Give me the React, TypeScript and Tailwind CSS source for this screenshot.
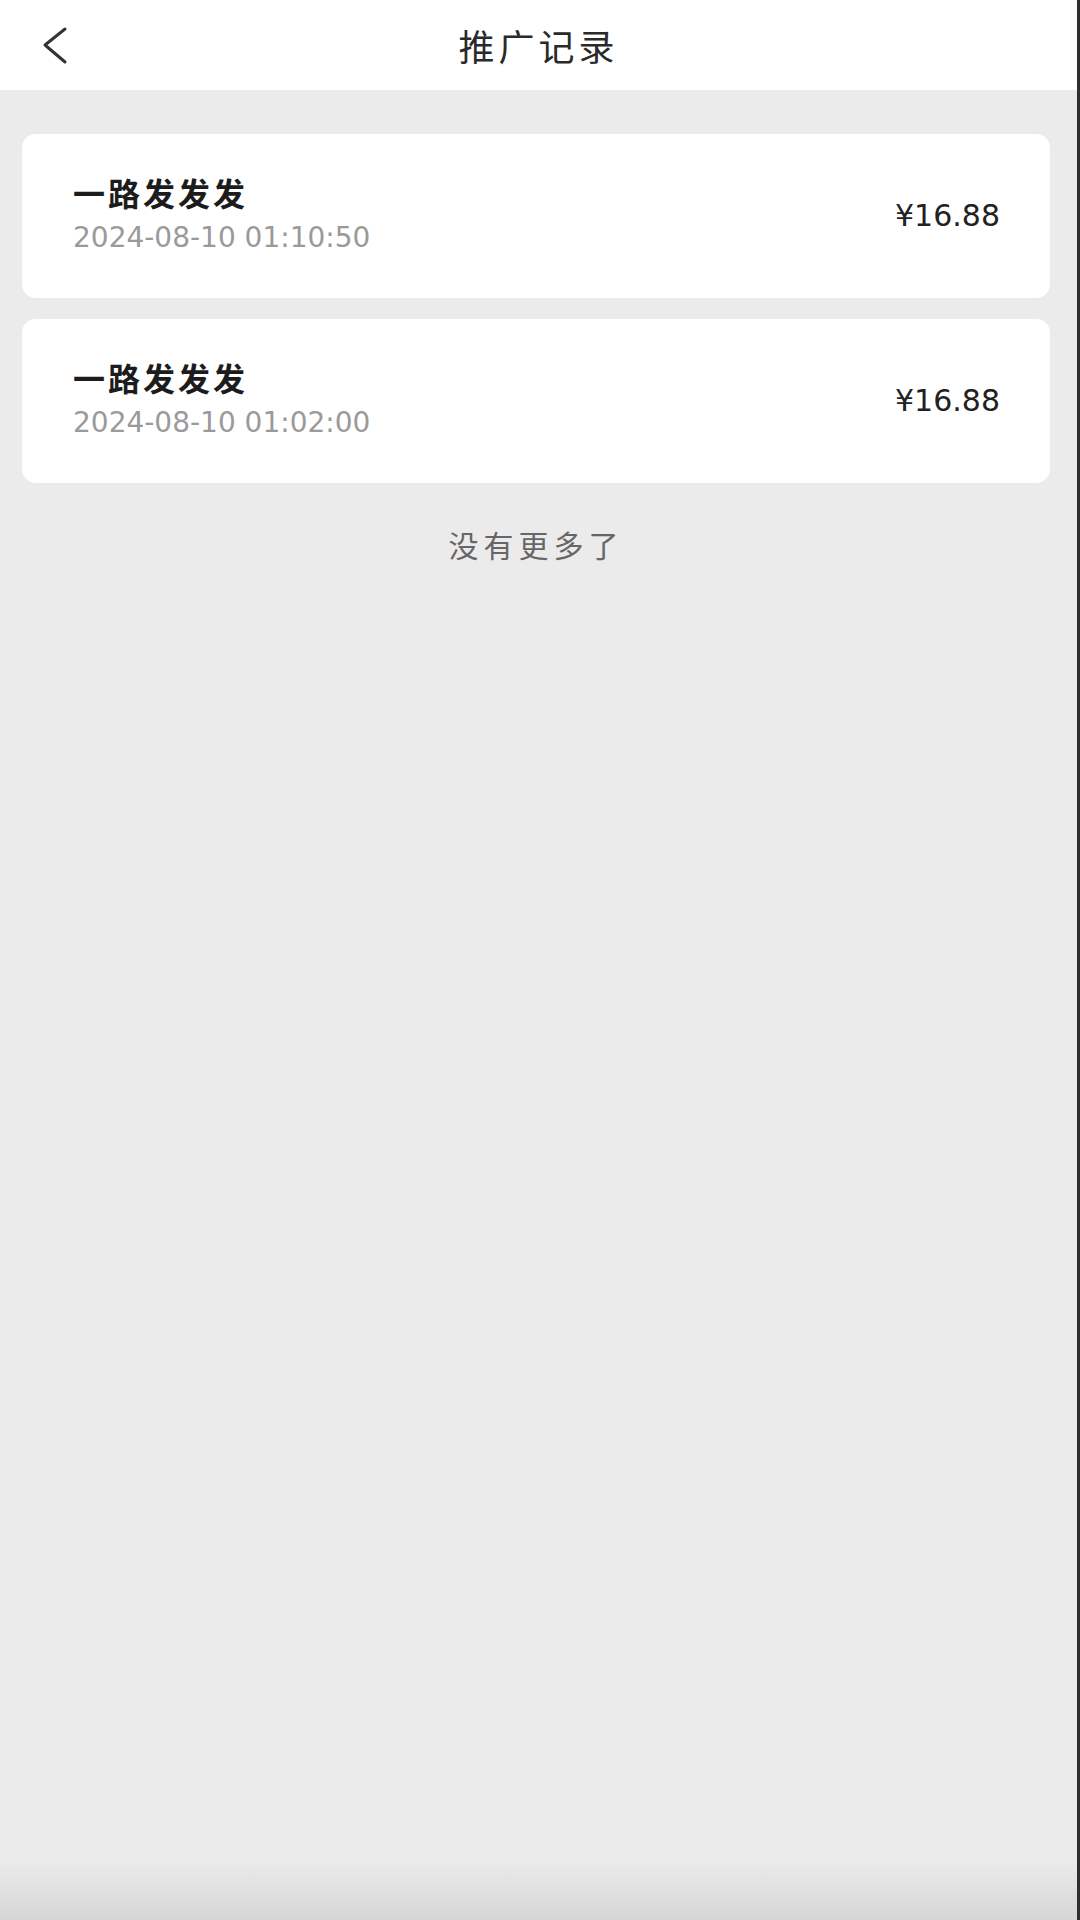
const records = [
  { id: 1, name: "一路发发发", time: "2024-08-10 01:10:50", amount: "16.88" },
  { id: 2, name: "一路发发发", time: "2024-08-10 01:02:00", amount: "16.88" },
];

const font = "font-['DejaVu_Sans','Noto_Sans_CJK_SC',sans-serif]";

function BackIcon() {
  return (
    <svg width="30" height="40" viewBox="0 0 30 40" fill="none">
      <polyline points="24,4 4,20 24,37" stroke="#333" strokeWidth="3" strokeLinecap="round" strokeLinejoin="round" />
    </svg>
  );
}

export default function App() {
  return (
    <div className={`${font} w-[1080px] h-[1920px] flex flex-col bg-[#ebebeb] border-r-[3px] border-[#2e2e2e]`}>
      {/* header */}
      <header className="h-[90px] shrink-0 bg-white grid grid-cols-[1fr_auto_1fr] items-center">
        <div className="pl-[41px] flex items-center">
          <BackIcon />
        </div>
        <h1 className="text-[36px] leading-none tracking-[4px] text-[#2a2a2a] font-['Noto_Sans_CJK_SC',sans-serif]">推广记录</h1>
        <div />
      </header>

      <main className="flex-1 flex flex-col pl-[22px] pr-[27px] pt-[44px]">
        <div className="flex flex-col gap-[21px]">
          {records.map((r) => (
            <div key={r.id} className="h-[164px] bg-white rounded-[14px] flex items-center justify-between pl-[51px] pr-[50px]">
              <div className="flex flex-col gap-[10px] pb-[4px]">
                <span className="text-[32px] leading-[38px] font-bold tracking-[3px] text-[#1c1c1c] font-['Noto_Sans_CJK_SC',sans-serif]">{r.name}</span>
                <span className="text-[28px] leading-[34px] text-[#9a9a9a]">{r.time}</span>
              </div>
              <span className="text-[30px] leading-none text-[#222]">¥{r.amount}</span>
            </div>
          ))}
        </div>
        <p className="mt-[41px] text-center text-[30px] leading-[40px] tracking-[5px] text-[#666] font-['Noto_Sans_CJK_SC',sans-serif]">没有更多了</p>
      </main>

      <div className="h-[60px] shrink-0 bg-gradient-to-b from-[#ebebeb] to-[#d6d6d6]" />
    </div>
  );
}
